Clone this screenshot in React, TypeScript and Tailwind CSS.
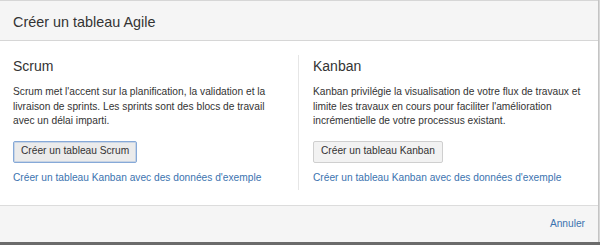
import React from "react";

const font = { fontFamily: '"Liberation Sans", Arial, sans-serif' };

function Column({
  title,
  lines,
  button,
  focused,
  className,
}: {
  title: string;
  lines: string[];
  button: string;
  focused?: boolean;
  className: string;
}) {
  return (
    <div className={className}>
      <h2 className="text-[14px] leading-[22px] text-[#333]">{title}</h2>
      <p className="mt-[8px] text-[10.2px] leading-[14.7px] text-[#333]">
        {lines.map((l, i) => (
          <React.Fragment key={i}>
            {l}
            {i < lines.length - 1 && <br />}
          </React.Fragment>
        ))}
      </p>
      <div className="mt-[11.5px] flex">
        <button
          className={
            "h-[22px] px-[7px] pb-[2px] text-[10.2px] leading-[18px] text-[#333] rounded-[2px] border " +
            (focused
              ? "border-[#86a9d8] bg-[#ebebeb] shadow-[inset_0_0_0_1px_rgba(134,169,216,0.35)]"
              : "border-[#cfcfcf] bg-[#f2f2f2]")
          }
        >
          {button}
        </button>
      </div>
      <div className="mt-[8px] text-[10.2px] leading-[14.7px] text-[#3b73af]">
        Créer un tableau Kanban avec des données d'exemple
      </div>
    </div>
  );
}

export default function App() {
  return (
    <div className="w-[600px] h-[245px] bg-[#d8d8d8] overflow-hidden" style={font}>
      <div className="w-[599px] h-[242px] flex flex-col bg-white border-r border-[#c4c4c4]">
        <div className="border-t border-b border-[#d6d6d6] bg-[#f5f5f5] pt-[11px] pb-[8px] pl-[13px]">
          <div className="text-[14.4px] leading-[20px] text-[#333]">Créer un tableau Agile</div>
        </div>
        <div className="flex-1 flex pt-[14px]">
          <Column
            className="w-[298px] pl-[13px] pb-[5px] self-start"
            title="Scrum"
            lines={[
              "Scrum met l'accent sur la planification, la validation et la",
              "livraison de sprints. Les sprints sont des blocs de travail",
              "avec un délai imparti.",
            ]}
            button="Créer un tableau Scrum"
            focused
          />
          <Column
            className="flex-1 pl-[14px] pb-[5px] border-l border-[#e6e6e6] self-start"
            title="Kanban"
            lines={[
              "Kanban privilégie la visualisation de votre flux de travaux et",
              "limite les travaux en cours pour faciliter l'amélioration",
              "incrémentielle de votre processus existant.",
            ]}
            button="Créer un tableau Kanban"
          />
        </div>
        <div className="h-[37px] border-t border-[#dcdcdc] bg-[#f5f5f5] flex justify-end pr-[13px] pt-[10.5px]">
          <span className="text-[10.2px] leading-[14.7px] text-[#3b73af]">Annuler</span>
        </div>
      </div>
      <div className="h-[3px] w-full bg-[#6b6b6b]" />
    </div>
  );
}
